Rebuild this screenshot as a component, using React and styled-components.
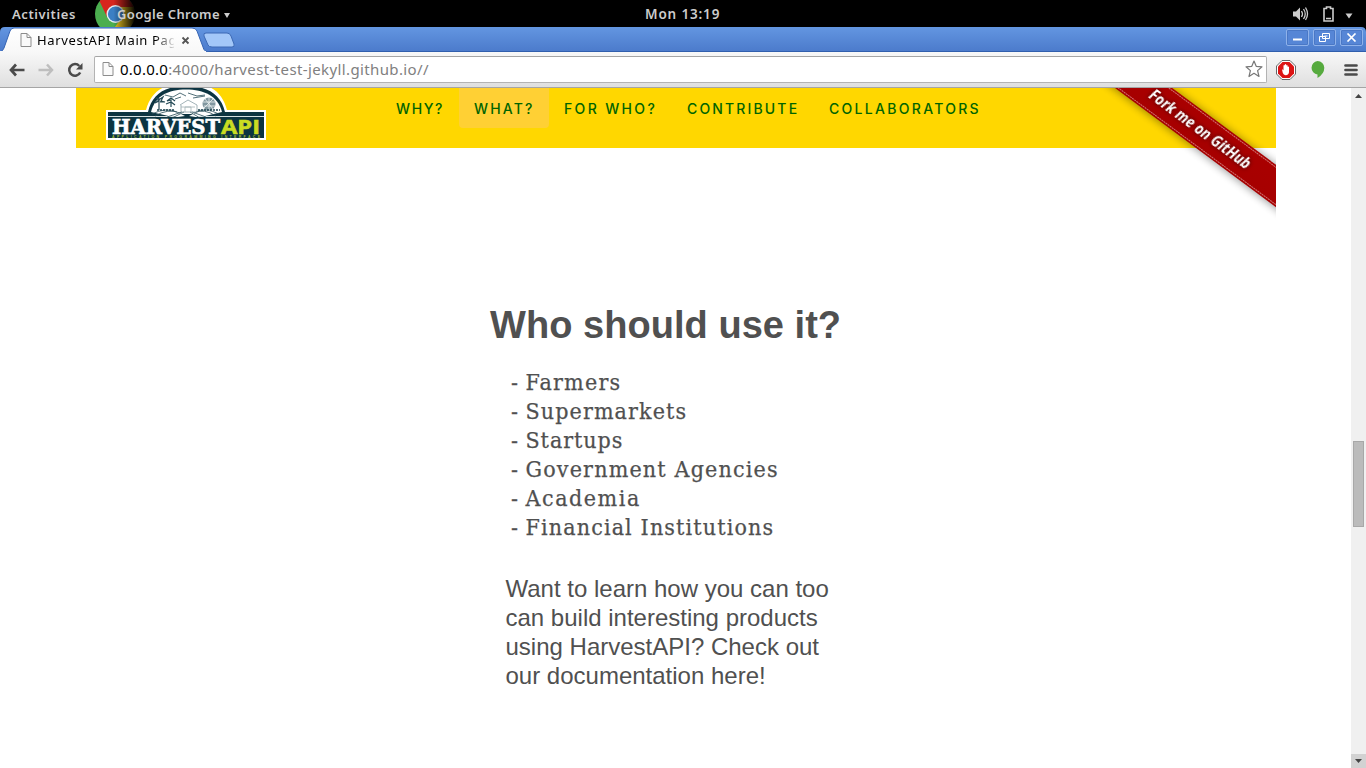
import React from "react";
import styled, { createGlobalStyle } from "styled-components";

const Global = createGlobalStyle`
  *{box-sizing:border-box}
  html,body{margin:0;padding:0;height:100%;overflow:hidden;background:#fff}
  svg{display:block;flex:none}
`;
const UI = `"Noto Sans","Open Sans",sans-serif`;

const Screen = styled.div`
  width:1366px;height:768px;display:flex;flex-direction:column;overflow:hidden;
`;
const TopBar = styled.div`
  height:27px;flex:none;background:#000;display:flex;align-items:center;position:relative;
  font:600 13px/28px ${UI};color:#ccc;
`;
const Activities = styled.span`
  margin-left:12px;width:83px;letter-spacing:0.6px;padding-top:1px;
`;
const AppMenu = styled.div`
  display:flex;align-items:center;height:27px;width:150px;position:relative;
`;
const AppName = styled.span`
  position:absolute;left:22px;top:0;white-space:nowrap;letter-spacing:0.35px;
`;
const AppArrow = styled.span`
  position:absolute;left:129px;top:13px;border:3.5px solid transparent;
  border-top:5px solid #ccc;border-bottom:0;
`;
const Clock = styled.span`
  position:absolute;left:645px;top:0;white-space:nowrap;font-size:13.5px;letter-spacing:0.85px;
`;
const Tray = styled.div`
  margin-left:auto;margin-right:12px;display:flex;align-items:center;
`;

const TabStrip = styled.div`
  height:25px;flex:none;display:flex;background:#000;position:relative;
`;
const StripArt = styled.svg`
  position:absolute;left:0;top:0;
`;
const Tab = styled.div`
  position:relative;display:flex;align-items:center;width:205px;padding-left:20px;height:26px;
`;
const TabTitle = styled.span`
  margin-left:5px;width:137px;overflow:hidden;white-space:nowrap;color:#000;
  font:13px/26px ${UI};letter-spacing:0.63px;
  -webkit-mask-image:linear-gradient(90deg,#000 118px,transparent 139px);
`;
const TabClose = styled.svg`
  margin-left:7px;
`;
const WindowButtons = styled.div`
  position:relative;margin-left:auto;display:flex;gap:4px;padding:2px 3px 0 0;
`;
const WinButton = styled.div`
  width:23px;height:17px;border:1px solid #8fb2ea;border-radius:2px;
  display:flex;align-items:center;justify-content:center;box-shadow:0 0 0 1px #4a78c6 inset;
  background:#5686d6;
`;

const Toolbar = styled.div`
  height:36px;flex:none;display:flex;align-items:center;padding:0 8px 0 9px;
  background:linear-gradient(#f8f8f8,#dfdfdf);border-bottom:1px solid #a5a5a5;
`;
const NavIcons = styled.div`
  display:flex;gap:13px;width:85px;align-items:center;
`;
const AddressBar = styled.div`
  height:27px;width:1173px;border:1px solid #b3b3b3;border-top-color:#a5a5a5;border-radius:2px;
  background:#fff;display:flex;align-items:center;padding:0 3px 1px 7px;
`;
const Url = styled.span`
  flex:1;margin-left:6px;color:#808080;font:15px/24px ${UI};letter-spacing:0.38px;
  b{font-weight:400;color:#000;letter-spacing:0.25px}
`;
const Extensions = styled.div`
  flex:1;display:flex;align-items:center;padding-left:9px;
`;
const Gap = styled.span`
  flex:${(p) => p.$grow};
`;

const Viewport = styled.div`
  flex:1;display:flex;min-height:0;background:#fff;
`;
const Page = styled.main`
  flex:1;min-width:0;padding:0 75px 0 76px;
`;
const SiteHeader = styled.header`
  position:relative;height:60px;width:1200px;background:#ffd700;display:flex;padding-left:29px;
`;
const Menu = styled.nav`
  display:flex;margin-left:114px;
`;
const MenuItem = styled.a`
  height:40px;width:${(p) => p.$w}px;padding-left:15px;white-space:nowrap;color:#006400;
  border-radius:0 0 4px 4px;background:${(p) => (p.$active ? "#ffd034" : "transparent")};
  font:500 14px/42px Inter,sans-serif;letter-spacing:${(p) => p.$ls}px;
`;
const Ribbon = styled.svg`
  position:absolute;right:0;top:0;
`;
const RibbonText = styled.text`
  font:italic bold 15.5px "Open Sans","Noto Sans",sans-serif;fill:#fff;
  filter:drop-shadow(0 0 2px #300);
`;
const Content = styled.section`
  margin:154px 0 0 414px;color:#505050;
`;
const Title = styled.h1`
  margin:0;font:bold 38px/46px "Liberation Sans",Arial,sans-serif;letter-spacing:0.04px;
`;
const List = styled.ul`
  list-style:none;margin:20px 0 0;padding:0 0 0 21px;
`;
const ListItem = styled.li`
  display:flex;white-space:nowrap;font:23px/29px "DejaVu Serif Condensed","DejaVu Serif",serif;
  font-stretch:condensed;letter-spacing:${(p) => p.$ls}px;-webkit-text-stroke:0.25px #505050;
  &::before{content:"-";width:14.5px;flex:none}
`;
const Paragraph = styled.p`
  margin:32px 0 0 15.5px;width:350px;font:24px/29px "Liberation Sans",Arial,sans-serif;
`;
const ScrollTrack = styled.div`
  width:15px;flex:none;background:#f0f0f0;display:flex;flex-direction:column;align-items:center;
`;
const ScrollArrow = styled.div`
  width:15px;height:14px;display:flex;align-items:center;justify-content:center;
  padding-top:${(p) => (p.$down ? 0 : 2)}px;
  background:${(p) => (p.$down ? "#d2d2d2" : "#f0f0f0")};
`;
const ScrollThumb = styled.div`
  margin:339px 0 auto;width:11px;height:86px;background:#bbb;border:1px solid #a8a8a8;
`;

const PageIcon = () => (
  <svg width="12" height="14" viewBox="0 0 12 14">
    <path d="M1 .5h6l4 4v9H1zM7 .5v4h4" fill="#fafafa" stroke="#8c8c8c" />
  </svg>
);

const ChromeLogo = () => (
  <svg width="46" height="27" viewBox="0 0 46 27">
    <defs>
      <linearGradient id="fade"><stop offset=".4" stopColor="#000" stopOpacity="0" /><stop offset=".88" stopColor="#000" /></linearGradient>
      <clipPath id="disc"><circle cx="20" cy="14" r="20" /></clipPath>
    </defs>
    <g clipPath="url(#disc)">
      <rect width="46" height="27" fill="#4bae4f" />
      <path d="M20 5H46V27H20L27 17z" fill="#e8c21c" />
      <path d="M4 0H46V7H20L12 17z" fill="#d7261e" />
    </g>
    <circle cx="20.500" cy="14" r="9" fill="#e8eef3" />
    <circle cx="20.500" cy="14" r="7.600" fill="#3b7fc4" />
    <rect width="46" height="27" fill="url(#fade)" />
  </svg>
);

const HarvestLogo = () => (
  <svg width="162" height="54" viewBox="0 1 162 54">
    <path d="M1 23H41C46 5 58-4 82-4S117 5 122 23H161V53H1z" fill="#fff" />
    <path d="M3 25H43C47 7 60-1 81-1S116 7 120 25H159V51H3z" fill="#0c3441" />
    <path d="M46 25C50 9 63 2.500 81 2.500S113 9 117 25L96 30H68z" fill="#fff" />
    <path d="M3 29.500H70M94 29.500H159" stroke="#d5dfe0" />
    <g fill="none" stroke="#264b57" strokeWidth=".8">
      <path d="M60 8l8 2 7-4 6 3M83 6l9 3 8-1M88 11l12-2M70 12l6-2" />
      <path d="M47 27Q61 20 72 25M50 29Q63 21 75 26M62 30L77 25M67 31L79 25M114 27Q100 20 91 25M111 29Q99 21 89 26M101 30L87 25M95 31L85 25" />
      <path d="M75 18l8-5 9 5v7H76v-7" stroke="#8ca0a6" />
      <path d="M80 25v-5h6v5M76 20h14" stroke="#a5b4b8" />
      <path d="M54 23v-9l-4 2 4-3-3-2 4 1 3-2-2 4 4 1-5 0M66 20v-7l-4 1 4-3 4 3M61 17l5-2 4 3M105 24v-7" strokeWidth="1.200" />
    </g>
    <circle cx="104" cy="17" r="6.500" fill="#8197a0" />
    <path d="M98 15h12M99 19h11M100 12l8 10M108 12l-9 9M104 10v14" stroke="#eef2f3" strokeWidth=".8" />
    <path d="M52 23h18M93 23h22" stroke="#1d4350" strokeDasharray="2 1" strokeWidth="1.500" />
    <path d="M76 27H88L84 29L97 31H66L80 29z" fill="#0c3441" />
    <text x="7" y="47" textLength="108" lengthAdjust="spacingAndGlyphs" fill="#fff" stroke="#fff" strokeWidth=".7" fontFamily="DejaVu Serif" fontWeight="bold" fontSize="20">HARVEST</text>
    <text x="116" y="47" textLength="39" lengthAdjust="spacingAndGlyphs" fill="#c9dc22" stroke="#c9dc22" strokeWidth=".6" fontFamily="Open Sans, Noto Sans" fontWeight="bold" fontSize="20">API</text>
    <text x="7" y="50.700" textLength="148" fill="#a9bc32" fontFamily="Liberation Sans" fontWeight="bold" fontSize="3.500">APPLICATION PROGRAMMING INTERFACE</text>
  </svg>
);

const GithubRibbon = () => (
  <Ribbon width="190" height="135" viewBox="1086 88 190 135">
    <defs>
      <filter id="soft" x="-10%" y="-50%" width="120%" height="200%"><feGaussianBlur stdDeviation="4.500" /></filter>
      <linearGradient id="red" x1="0" y1="0" x2="0" y2="1"><stop offset="0" stopColor="#a90000" /><stop offset="1" stopColor="#a60000" /></linearGradient>
    </defs>
    <g transform="translate(1199 129) rotate(36.500)">
      <rect x="-150" y="-17" width="300" height="35" fill="#000" opacity=".4" filter="url(#soft)" />
      <rect x="-150" y="-17" width="300" height="34" fill="url(#red)" />
      <path d="M-150-15H150M-150 15H150" stroke="#d07070" strokeWidth="1" strokeDasharray="2 .6" />
      <RibbonText x="-60" y="5.500" textLength="122" lengthAdjust="spacingAndGlyphs">Fork me on GitHub</RibbonText>
    </g>
  </Ribbon>
);

const menu = [
  { label: "WHY?", w: 78, ls: 1.6 },
  { label: "WHAT?", w: 90, ls: 2.2, active: true },
  { label: "FOR WHO?", w: 123, ls: 2.35 },
  { label: "CONTRIBUTE", w: 142, ls: 2.15 },
  { label: "COLLABORATORS", w: 182, ls: 2.3 },
];
const audience = [
  ["Farmers", 1.2],
  ["Supermarkets", 1.1],
  ["Startups", 0.95],
  ["Government Agencies", 1.17],
  ["Academia", 1.55],
  ["Financial Institutions", 1.14],
];

export default function App() {
  return (
    <Screen>
      <Global />
      <TopBar>
        <Activities>Activities</Activities>
        <AppMenu>
          <ChromeLogo />
          <AppName>Google Chrome</AppName>
          <AppArrow />
        </AppMenu>
        <Clock>Mon 13:19</Clock>
        <Tray>
          <svg width="64" height="27" viewBox="1290 0 64 27">
            <path d="M1293 11.500h3l4-4v13l-4-4h-3z" fill="#ccc" />
            <path d="M1301.500 11q2 3 0 6M1303.500 9q3.500 5 0 10M1305.500 7.500q4 6.500 0 12.500" fill="none" stroke="#ccc" strokeWidth="1.300" />
            <path d="M1324 8.500h2.500V7h4v1.500h2.500V21h-9z" fill="none" stroke="#ccc" strokeWidth="1.600" />
            <path d="M1326 18.500h5" stroke="#ccc" strokeWidth="1.500" />
            <path d="M1345.500 13.500h7l-3.500 5z" fill="#ccc" />
          </svg>
        </Tray>
      </TopBar>

      <TabStrip>
        <StripArt width="1366" height="25" viewBox="0 0 1366 25">
          <defs>
            <linearGradient id="strip" x1="0" y1="0" x2="0" y2="1"><stop offset="0" stopColor="#6396e1" /><stop offset="1" stopColor="#4b7acb" /></linearGradient>
            <linearGradient id="tab" x1="0" y1="0" x2="0" y2="1"><stop offset="0" stopColor="#fff" /><stop offset="1" stopColor="#f8f8f8" /></linearGradient>
          </defs>
          <path d="M0 25V5Q0 0 5 0H1361Q1366 0 1366 5V25z" fill="url(#strip)" />
          <path d="M0 24.500H1366" stroke="#315fad" />
          <path d="M0 25Q3 24 4 21L10 4Q11 1 14 1H192Q196 1 197 4L203 20Q204 25 209 25z" fill="url(#tab)" stroke="#3564b4" strokeWidth="1" />
          <rect x="0" y="24" width="206" height="2" fill="#f8f8f8" />
          <path d="M206 6H227Q230 6 231 9L234 17Q235 20 232 20H212Q209 20 208 18L204 9Q203 6 206 6z" fill="#a3c7f8" stroke="#3c69b5" />
        </StripArt>
        <Tab>
          <PageIcon />
          <TabTitle>HarvestAPI Main Page</TabTitle>
          <TabClose width="9" height="9" viewBox="0 0 9 9"><path d="M1.500 1.500l6 6M7.500 1.500l-6 6" stroke="#555" strokeWidth="1.800" /></TabClose>
        </Tab>
        <WindowButtons>
          <WinButton><svg width="11" height="9"><path d="M1 6.500h9" stroke="#fff" strokeWidth="2" /></svg></WinButton>
          <WinButton><svg width="11" height="9"><path d="M3.500 .5h7v5h-7zM.5 3.500h6v5h-6z" fill="#5686d6" stroke="#fff" /><path d="M5.500 3h3" stroke="#fff" /></svg></WinButton>
          <WinButton><svg width="11" height="9"><path d="M1.500 .5l8 8M9.500 .5l-8 8" stroke="#fff" strokeWidth="1.700" /></svg></WinButton>
        </WindowButtons>
      </TabStrip>

      <Toolbar>
        <NavIcons>
          <svg width="16" height="14" viewBox="0 0 16 14"><path d="M7 1.500L2 7l5 5.500M2.500 7H15.500" fill="none" stroke="#4a4a4a" strokeWidth="2.700" /></svg>
          <svg width="16" height="14" viewBox="0 0 16 14"><path d="M9 1.500L14 7l-5 5.500M13.500 7H.5" fill="none" stroke="#bebebe" strokeWidth="2.500" /></svg>
          <svg width="17" height="16" viewBox="0 0 17 16"><path d="M13.200 10.500A5.800 5.800 0 1 1 12.300 4" fill="none" stroke="#4a4a4a" strokeWidth="2.500" /><path d="M15.500 1v6.500H9z" fill="#4a4a4a" /></svg>
        </NavIcons>
        <AddressBar>
          <PageIcon />
          <Url><b>0.0.0.0</b>:4000/harvest-test-jekyll.github.io//</Url>
          <svg width="18" height="18" viewBox="0 0 18 18"><path d="M9 1l2.200 5.300 5.800.5-4.400 3.800 1.400 5.900L9 13.300 4 16.500l1.400-5.900L1 6.800l5.800-.5z" fill="#fff" stroke="#777" strokeWidth="1.200" strokeLinejoin="round" /></svg>
        </AddressBar>
        <Extensions>
          <svg width="20" height="20" viewBox="0 0 20 20">
            <path d="M6 .5h8L19.500 6v8L14 19.500H6L.5 14V6z" fill="#fff" stroke="#666" />
            <path d="M6.500 2h7L18 6.500v7L13.500 18h-7L2 13.500v-7z" fill="#dc1414" />
            <path d="M6 9.500q1-.5 1.500 1V5.500q.8-1 1.300 0V4.600q.8-1 1.400 0v.9q.8-.8 1.400 0v1.300q1-.7 1.400.2V12q0 3-3.500 3.200Q7.500 15 6.800 13z" fill="#fff" />
          </svg>
          <Gap $grow={5} />
          <svg width="15" height="19" viewBox="0 0 15 19"><path d="M7.500 1a6.800 6.800 0 0 1 6.800 6.800Q14.300 14 7.500 18v-3.500A6.800 6.800 0 0 1 7.500 1z" fill="#56aa3e" /></svg>
          <Gap $grow={7} />
          <svg width="14" height="14" viewBox="0 0 14 14"><path d="M1.500 2.500h11M1.500 7h11M1.500 11.500h11" stroke="#4a4a4a" strokeWidth="2.700" strokeLinecap="round" /></svg>
        </Extensions>
      </Toolbar>

      <Viewport>
        <Page>
          <SiteHeader>
            <HarvestLogo />
            <Menu>
              {menu.map((m) => (
                <MenuItem key={m.label} $w={m.w} $ls={m.ls} $active={m.active}>{m.label}</MenuItem>
              ))}
            </Menu>
            <GithubRibbon />
          </SiteHeader>
          <Content>
            <Title>Who should use it?</Title>
            <List>
              {audience.map(([t, ls]) => <ListItem key={t} $ls={ls}>{t}</ListItem>)}
            </List>
            <Paragraph>
              Want to learn how you can too<br />can build interesting products<br />using HarvestAPI? Check out<br />our documentation here!
            </Paragraph>
          </Content>
        </Page>
        <ScrollTrack>
          <ScrollArrow><svg width="7" height="4"><path d="M0 4L3.500 0L7 4z" fill="#444" /></svg></ScrollArrow>
          <ScrollThumb />
          <ScrollArrow $down><svg width="7" height="4"><path d="M0 0h7L3.500 4z" fill="#444" /></svg></ScrollArrow>
        </ScrollTrack>
      </Viewport>
    </Screen>
  );
}
